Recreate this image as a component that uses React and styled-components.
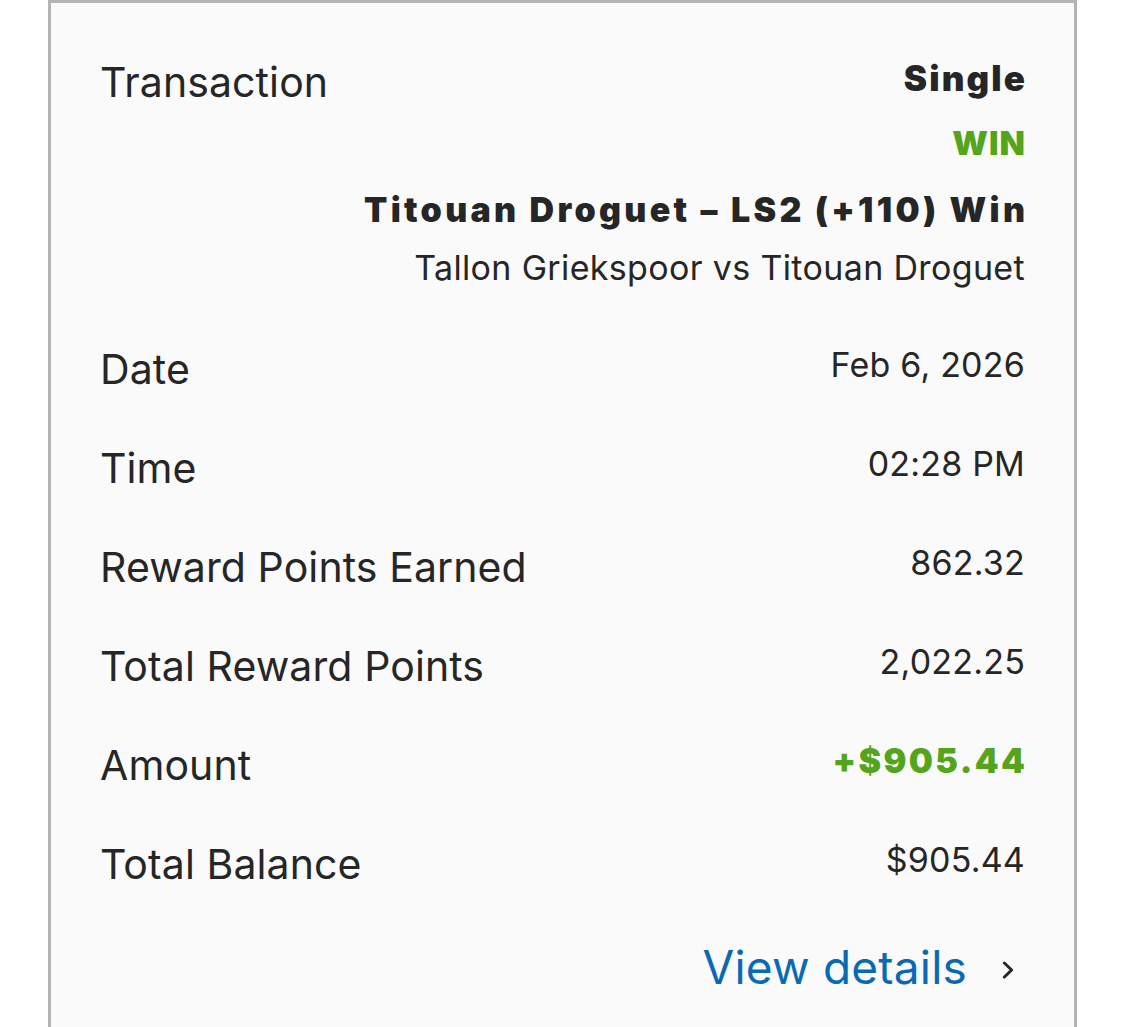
import React from "react";
import styled, { createGlobalStyle } from "styled-components";

const GlobalStyle = createGlobalStyle`
  html, body {
    margin: 0;
    padding: 0;
    background: #ffffff;
  }
  body {
    font-family: Inter, "Noto Sans", sans-serif;
    color: #262626;
  }
`;

const rows = [
  { label: "Date", value: "Feb 6, 2026" },
  { label: "Time", value: "02:28 PM" },
  { label: "Reward Points Earned", value: "862.32" },
  { label: "Total Reward Points", value: "2,022.25" },
  { label: "Amount", value: "+$905.44", positive: true },
  { label: "Total Balance", value: "$905.44" },
];

const App = () => {
  return (
    <>
      <GlobalStyle />
      <Page>
        <Card>
          <Row>
            <HeadLabel>Transaction</HeadLabel>
            <Summary>
              <BetType>Single</BetType>
              <Result>WIN</Result>
              <Selection>Titouan Droguet – LS2 (+110) Win</Selection>
              <Event>Tallon Griekspoor vs Titouan Droguet</Event>
            </Summary>
          </Row>
          <List>
            {rows.map((row) => (
              <Row key={row.label}>
                <Label>{row.label}</Label>
                <Value $positive={row.positive}>{row.value}</Value>
              </Row>
            ))}
          </List>
          <Footer>
            <DetailsLink href="#">View details</DetailsLink>
            <Chevron viewBox="0 0 13 18" aria-hidden="true">
              <path
                d="M2.4 2 L9.6 9 L2.4 16"
                fill="none"
                stroke="#262626"
                strokeWidth="3"
                strokeLinecap="round"
                strokeLinejoin="round"
              />
            </Chevron>
          </Footer>
        </Card>
      </Page>
    </>
  );
};

const Page = styled.div`
  width: 1125px;
  height: 1027px;
  overflow: hidden;
  background: #ffffff;
`;

const Card = styled.div`
  box-sizing: border-box;
  margin-left: 48px;
  width: 1029px;
  min-height: 1027px;
  background: #fafafa;
  border: 3px solid #b4b4b4;
  border-bottom: none;
  padding: 43px 49px 0 49px;
`;

const Row = styled.div`
  display: flex;
  justify-content: space-between;
  align-items: flex-start;
`;

const List = styled.div`
  display: flex;
  flex-direction: column;
  gap: 49px;
  margin-top: 52px;
`;

const Label = styled.div`
  font-size: 41px;
  line-height: 50px;
  font-weight: 400;
  color: #262626;
  letter-spacing: 0.1px;
`;

const HeadLabel = styled(Label)`
  line-height: 72px;
`;

const Summary = styled.div`
  display: flex;
  flex-direction: column;
  align-items: flex-end;
  text-align: right;
`;

const BetType = styled.div`
  font-size: 35px;
  line-height: 65px;
  font-weight: 900;
  color: #262626;
  letter-spacing: 2.1px;
  margin-right: -2.1px;
`;

const Result = styled.div`
  font-size: 33px;
  line-height: 65px;
  font-weight: 900;
  color: #55a51c;
  letter-spacing: 1px;
  margin-right: -1px;
`;

const Selection = styled.div`
  font-size: 34px;
  line-height: 67px;
  font-weight: 900;
  color: #262626;
  letter-spacing: 3.3px;
  margin-right: -3.3px;
  white-space: nowrap;
`;

const Event = styled.div`
  font-size: 34px;
  line-height: 49px;
  font-weight: 400;
  color: #262626;
  letter-spacing: 0.35px;
  white-space: nowrap;
`;

const Value = styled.div`
  font-size: 34px;
  line-height: 42px;
  font-weight: ${(p) => (p.$positive ? 900 : 400)};
  color: ${(p) => (p.$positive ? "#55a51c" : "#262626")};
  letter-spacing: ${(p) => (p.$positive ? "2.4px" : "0.2px")};
  margin-right: ${(p) => (p.$positive ? "-2.4px" : "0")};
`;

const Footer = styled.div`
  display: flex;
  justify-content: flex-end;
  align-items: center;
  margin-top: 48px;
  padding-right: 10px;
`;

const DetailsLink = styled.a`
  font-size: 46px;
  line-height: 60px;
  font-weight: 400;
  color: #0b69b4;
  text-decoration: none;
  letter-spacing: 0.2px;
`;

const Chevron = styled.svg`
  width: 13px;
  height: 18px;
  margin-left: 35px;
  margin-top: 5px;
`;

export default App;
